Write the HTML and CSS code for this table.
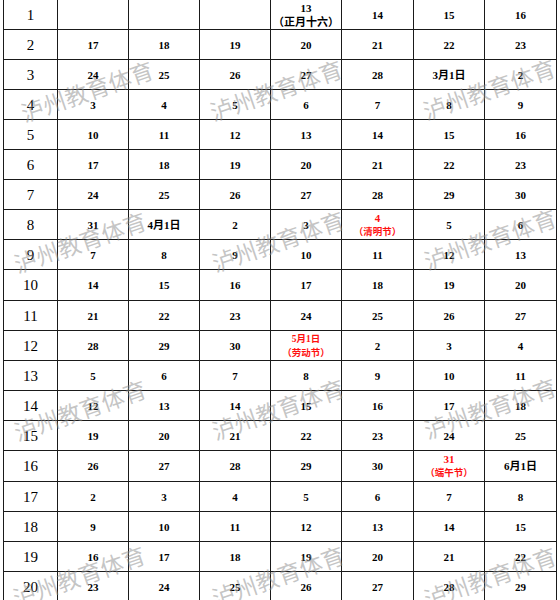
FILE: index.html
```html
<!DOCTYPE html>
<html lang="zh-CN">
<head>
<meta charset="utf-8">
<title>校历</title>
<link rel="stylesheet" href="styles.css">
</head>
<body>
<div class="page">
  <div class="cal">
    <div class="c wk">1</div><div class="c"></div><div class="c"></div><div class="c"></div><div class="c"><span>13</span><span class="cn">（正月十六）</span></div><div class="c">14</div><div class="c">15</div><div class="c">16</div>
    <div class="c wk">2</div><div class="c">17</div><div class="c">18</div><div class="c">19</div><div class="c">20</div><div class="c">21</div><div class="c">22</div><div class="c">23</div>
    <div class="c wk">3</div><div class="c">24</div><div class="c">25</div><div class="c">26</div><div class="c">27</div><div class="c">28</div><div class="c"><span class="md">3月1日</span></div><div class="c">2</div>
    <div class="c wk">4</div><div class="c">3</div><div class="c">4</div><div class="c">5</div><div class="c">6</div><div class="c">7</div><div class="c">8</div><div class="c">9</div>
    <div class="c wk">5</div><div class="c">10</div><div class="c">11</div><div class="c">12</div><div class="c">13</div><div class="c">14</div><div class="c">15</div><div class="c">16</div>
    <div class="c wk">6</div><div class="c">17</div><div class="c">18</div><div class="c">19</div><div class="c">20</div><div class="c">21</div><div class="c">22</div><div class="c">23</div>
    <div class="c wk">7</div><div class="c">24</div><div class="c">25</div><div class="c">26</div><div class="c">27</div><div class="c">28</div><div class="c">29</div><div class="c">30</div>
    <div class="c wk">8</div><div class="c">31</div><div class="c"><span class="md">4月1日</span></div><div class="c">2</div><div class="c">3</div><div class="c red"><span>4</span><span class="hol">（清明节）</span></div><div class="c">5</div><div class="c">6</div>
    <div class="c wk">9</div><div class="c">7</div><div class="c">8</div><div class="c">9</div><div class="c">10</div><div class="c">11</div><div class="c">12</div><div class="c">13</div>
    <div class="c wk">10</div><div class="c">14</div><div class="c">15</div><div class="c">16</div><div class="c">17</div><div class="c">18</div><div class="c">19</div><div class="c">20</div>
    <div class="c wk">11</div><div class="c">21</div><div class="c">22</div><div class="c">23</div><div class="c">24</div><div class="c">25</div><div class="c">26</div><div class="c">27</div>
    <div class="c wk">12</div><div class="c">28</div><div class="c">29</div><div class="c">30</div><div class="c red"><span class="hol">5月1日</span><span class="hol">（劳动节）</span></div><div class="c">2</div><div class="c">3</div><div class="c">4</div>
    <div class="c wk">13</div><div class="c">5</div><div class="c">6</div><div class="c">7</div><div class="c">8</div><div class="c">9</div><div class="c">10</div><div class="c">11</div>
    <div class="c wk">14</div><div class="c">12</div><div class="c">13</div><div class="c">14</div><div class="c">15</div><div class="c">16</div><div class="c">17</div><div class="c">18</div>
    <div class="c wk">15</div><div class="c">19</div><div class="c">20</div><div class="c">21</div><div class="c">22</div><div class="c">23</div><div class="c">24</div><div class="c">25</div>
    <div class="c wk">16</div><div class="c">26</div><div class="c">27</div><div class="c">28</div><div class="c">29</div><div class="c">30</div><div class="c red"><span>31</span><span class="hol">（端午节）</span></div><div class="c"><span class="md">6月1日</span></div>
    <div class="c wk">17</div><div class="c">2</div><div class="c">3</div><div class="c">4</div><div class="c">5</div><div class="c">6</div><div class="c">7</div><div class="c">8</div>
    <div class="c wk">18</div><div class="c">9</div><div class="c">10</div><div class="c">11</div><div class="c">12</div><div class="c">13</div><div class="c">14</div><div class="c">15</div>
    <div class="c wk">19</div><div class="c">16</div><div class="c">17</div><div class="c">18</div><div class="c">19</div><div class="c">20</div><div class="c">21</div><div class="c">22</div>
    <div class="c wk">20</div><div class="c">23</div><div class="c">24</div><div class="c">25</div><div class="c">26</div><div class="c">27</div><div class="c">28</div><div class="c">29</div>
  </div>
  <div class="wm" style="left:87px;top:91px">泸州教育体育</div>
  <div class="wm" style="left:276px;top:90px">泸州教育体育</div>
  <div class="wm" style="left:489px;top:89px">泸州教育体育</div>
  <div class="wm" style="left:80px;top:242px">泸州教育体育</div>
  <div class="wm" style="left:278px;top:241px">泸州教育体育</div>
  <div class="wm" style="left:490px;top:239px">泸州教育体育</div>
  <div class="wm" style="left:80px;top:410px">泸州教育体育</div>
  <div class="wm" style="left:278px;top:409px">泸州教育体育</div>
  <div class="wm" style="left:490px;top:408px">泸州教育体育</div>
  <div class="wm" style="left:79px;top:576px">泸州教育体育</div>
  <div class="wm" style="left:278px;top:576px">泸州教育体育</div>
  <div class="wm" style="left:490px;top:577px">泸州教育体育</div>
</div>
</body>
</html>
```
FILE: styles.css
```css
html, body {
  margin: 0;
  padding: 0;
  background: #fff;
}
body {
  width: 560px;
  height: 600px;
  overflow: hidden;
}
.page {
  position: relative;
  width: 560px;
  height: 600px;
  overflow: hidden;
}
.cal {
  display: grid;
  grid-template-columns: 53px 70px 70px 70px 70px 71px 70px 71px;
  grid-template-rows: 29px 29px 29px 29px 29px 29px 29px 29px 29px 30px 29px 29px 29px 29px 29px 30px 29px 29px 29px 29px;
  gap: 1px;
  padding: 1px;
  background: #1a1a1a;
  width: max-content;
  margin: -1px 0 0 3px;
}
.c {
  background: #fff;
  display: flex;
  flex-direction: column;
  align-items: center;
  justify-content: center;
  font-family: "Liberation Serif", "Noto Sans CJK SC", serif;
  font-weight: bold;
  font-size: 11px;
  line-height: 14px;
  color: #000;
}
.c.wk {
  font-weight: normal;
  font-size: 15px;
  line-height: 16px;
}
.md, .cn {
  font-family: "Liberation Serif", "Noto Sans CJK SC", serif;
  font-weight: bold;
  font-size: 11px;
}
.red {
  color: #ff1010;
}
.hol {
  font-size: 9.5px;
  line-height: 14px;
  font-weight: bold;
}
.wm {
  position: absolute;
  transform: translate(-50%, -50%) rotate(-19deg);
  font-family: "Noto Sans CJK SC", sans-serif;
  font-weight: 400;
  font-size: 23px;
  line-height: 23px;
  white-space: nowrap;
  color: rgba(140, 140, 140, 0.5);
}
```
